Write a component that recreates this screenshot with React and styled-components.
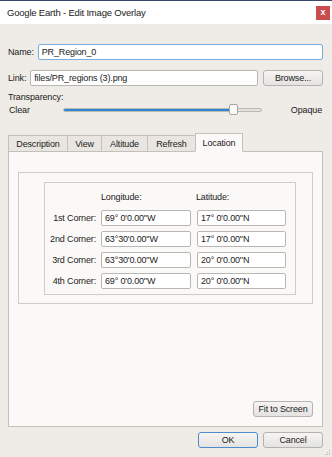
import React from "react";
import styled, { createGlobalStyle } from "styled-components";

const GlobalStyle = createGlobalStyle`
  html, body {
    margin: 0;
    padding: 0;
    background: #efebe7;
  }
  * {
    box-sizing: border-box;
  }
`;

const Window = styled.div`
  position: relative;
  width: 332px;
  height: 457px;
  background: #efebe7;
  font-family: "Liberation Sans", Arial, sans-serif;
  font-size: 9px;
  letter-spacing: -0.15px;
  color: #1b1b1b;
  display: flex;
  flex-direction: column;
  overflow: hidden;
`;

const TitleBar = styled.div`
  height: 24px;
  background: #ffffff;
  border-top: 1px solid #37476a;
  display: flex;
  align-items: center;
  justify-content: space-between;
  padding: 0 2px 0 7px;
  font-size: 9.5px;
  letter-spacing: -0.2px;
  color: #222;
`;

const CloseButton = styled.div`
  width: 14px;
  height: 14px;
  background: #c94d4d;
  display: flex;
  align-items: center;
  justify-content: center;
  color: #fff;
  font-size: 9px;
  font-weight: bold;
  line-height: 1;
`;

const Body = styled.div`
  flex: 1;
  display: flex;
  flex-direction: column;
  padding: 20px 9px 0 8px;
`;

const FieldRow = styled.div`
  display: flex;
  align-items: center;
  gap: 4px;
  height: 16px;
  margin-bottom: ${({ $mb }) => $mb || 0}px;
`;

const Label = styled.span`
  white-space: nowrap;
`;

const TextInput = styled.div`
  flex: ${({ $flex }) => ($flex ? 1 : "none")};
  height: 16px;
  background: #fff;
  border: 1px solid ${({ $focus }) => ($focus ? "#7aaee0" : "#b9b7b4")};
  border-radius: 2px;
  padding: 0 3px;
  display: flex;
  align-items: center;
  white-space: nowrap;
`;

const Button = styled.div`
  width: 60px;
  height: 16px;
  margin-left: ${({ $ml }) => $ml || 0}px;
  border: 1px solid ${({ $default }) => ($default ? "#4a8ccc" : "#b5b3b0")};
  border-radius: 3px;
  background: linear-gradient(#f6f5f4, #e5e3e1);
  display: flex;
  align-items: center;
  justify-content: center;
  white-space: nowrap;
`;

const SliderBlock = styled.div`
  margin-top: 6px;
  display: flex;
  flex-direction: column;
`;

const SliderRow = styled.div`
  display: flex;
  align-items: center;
  height: 14px;
  margin-top: 1px;
`;

const ClearLabel = styled.span`
  width: 55px;
  padding-left: 1px;
`;

const Track = styled.div`
  position: relative;
  width: 199px;
  height: 4px;
  border: 1px solid #bdbab6;
  border-radius: 2px;
  background: #e3e1de;
`;

const TrackFill = styled.div`
  height: 100%;
  background: #2f87d1;
  border-radius: 2px;
`;

const Thumb = styled.div`
  position: absolute;
  top: -5px;
  width: 9px;
  height: 11px;
  margin-left: -4px;
  background: #fbfbfb;
  border: 1px solid #a9a7a4;
  border-radius: 2px;
`;

const SliderEnd = styled.span`
  margin-left: auto;
  margin-right: 1px;
`;

const TabStrip = styled.div`
  margin-top: 15px;
  display: flex;
  align-items: flex-end;
  height: 19px;
  position: relative;
  z-index: 1;
`;

const Tab = styled.div`
  width: ${({ $w }) => $w}px;
  height: ${({ $active }) => ($active ? 19 : 17)}px;
  display: flex;
  align-items: center;
  justify-content: center;
  border: 1px solid #c3c0bc;
  border-bottom: 1px solid ${({ $active }) => ($active ? "#fbf9f7" : "#c3c0bc")};
  margin-left: -1px;
  background: ${({ $active }) => ($active ? "#fbf9f7" : "#e9e6e2")};
  margin-bottom: -1px;
  &:first-child {
    margin-left: 0;
  }
`;

const Panel = styled.div`
  height: 276px;
  background: #fbf9f7;
  border: 1px solid #c3c0bc;
  padding: 20px 9px 9px 9px;
  display: flex;
  flex-direction: column;
`;

const OuterGroup = styled.div`
  border: 1px solid #d0cdc9;
  height: 132px;
  padding: 9px 16px 0 25px;
`;

const InnerGroup = styled.div`
  border: 1px solid #d0cdc9;
  height: 113px;
  padding: 6px 8px 0 0;
  display: grid;
  grid-template-columns: 51px 90px 90px;
  grid-auto-rows: 16px;
  column-gap: 5px;
  row-gap: 5px;
  align-items: center;
`;

const HeadCell = styled.span`
  height: 16px;
  display: flex;
  align-items: center;
`;

const RowLabel = styled.span`
  text-align: right;
  white-space: nowrap;
`;

const CoordInput = styled(TextInput)`
  margin-left: ${({ $ml }) => $ml || 0}px;
`;

const PanelFooter = styled.div`
  margin-top: auto;
  display: flex;
  justify-content: flex-end;
`;

const DialogButtons = styled.div`
  display: flex;
  justify-content: flex-end;
  gap: 5px;
  margin-top: 5px;
`;

const Grip = styled.svg`
  position: absolute;
  right: 1px;
  bottom: 1px;
`;

const corners = [
  ["1st Corner:", "69° 0'0.00\"W", "17° 0'0.00\"N"],
  ["2nd Corner:", "63°30'0.00\"W", "17° 0'0.00\"N"],
  ["3rd Corner:", "63°30'0.00\"W", "20° 0'0.00\"N"],
  ["4th Corner:", "69° 0'0.00\"W", "20° 0'0.00\"N"],
];

const tabs = [
  ["Description", 60],
  ["View", 35],
  ["Altitude", 47],
  ["Refresh", 49],
  ["Location", 48],
];

export default function App() {
  return (
    <>
      <GlobalStyle />
      <Window>
        <TitleBar>
          <span>Google Earth - Edit Image Overlay</span>
          <CloseButton>x</CloseButton>
        </TitleBar>
        <Body>
          <FieldRow $mb={10}>
            <Label>Name:</Label>
            <TextInput $flex $focus>PR_Region_0</TextInput>
          </FieldRow>
          <FieldRow>
            <Label>Link:</Label>
            <TextInput $flex>files/PR_regions (3).png</TextInput>
            <Button $ml={1}>Browse...</Button>
          </FieldRow>
          <SliderBlock>
            <Label>Transparency:</Label>
            <SliderRow>
              <ClearLabel>Clear</ClearLabel>
              <Track>
                <TrackFill style={{ width: "86%" }} />
                <Thumb style={{ left: "86%" }} />
              </Track>
              <SliderEnd>Opaque</SliderEnd>
            </SliderRow>
          </SliderBlock>
          <TabStrip>
            {tabs.map(([name, w]) => (
              <Tab key={name} $w={w} $active={name === "Location"}>
                {name}
              </Tab>
            ))}
          </TabStrip>
          <Panel>
            <OuterGroup>
              <InnerGroup>
                <span />
                <HeadCell>Longitude:</HeadCell>
                <HeadCell>Latitude:</HeadCell>
                {corners.map(([label, lon, lat]) => (
                  <React.Fragment key={label}>
                    <RowLabel>{label}</RowLabel>
                    <CoordInput>{lon}</CoordInput>
                    <CoordInput $ml={1}>{lat}</CoordInput>
                  </React.Fragment>
                ))}
              </InnerGroup>
            </OuterGroup>
            <PanelFooter>
              <Button>Fit to Screen</Button>
            </PanelFooter>
          </Panel>
          <DialogButtons>
            <Button $default>OK</Button>
            <Button>Cancel</Button>
          </DialogButtons>
        </Body>
        <Grip width="7" height="7" viewBox="0 0 7 7">
          <rect x="5" y="1" width="1" height="1" fill="#b8b5b1" />
          <rect x="3" y="3" width="1" height="1" fill="#b8b5b1" />
          <rect x="5" y="3" width="1" height="1" fill="#b8b5b1" />
          <rect x="1" y="5" width="1" height="1" fill="#b8b5b1" />
          <rect x="3" y="5" width="1" height="1" fill="#b8b5b1" />
          <rect x="5" y="5" width="1" height="1" fill="#b8b5b1" />
        </Grip>
      </Window>
    </>
  );
}
